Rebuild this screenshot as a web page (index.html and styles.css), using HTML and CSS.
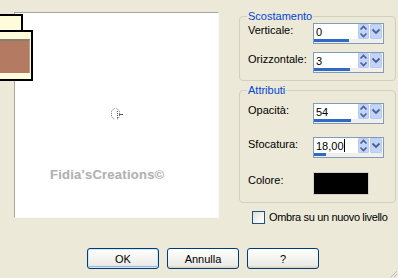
FILE: index.html
```html
<!DOCTYPE html>
<html lang="it">
<head>
<meta charset="utf-8">
<title>Ombra</title>
<link rel="stylesheet" href="styles.css">
</head>
<body>
<div class="dialog">
  <div class="main">
    <div class="preview">
      <div class="thumb thumb1"><div class="swatch"></div></div>
      <div class="thumb thumb2"><div class="swatch"></div></div>
      <svg class="cursor" width="14" height="14" viewBox="0 0 14 14">
        <path d="M4.5 1.5 L3 2.5 L1.5 4.5 L1.5 9.5 L3 11.5 L4.5 12.5" fill="none" stroke="#6f6f6f" stroke-width="1" stroke-dasharray="1 1"/>
        <path d="M6.5 1.5 L8 2.5 L9.5 4.5 L9.5 9.5 L8 11.5 L6.5 12.5" fill="none" stroke="#6f6f6f" stroke-width="1" stroke-dasharray="1 1"/>
        <line x1="7.5" y1="4" x2="7.5" y2="11" stroke="#555" stroke-width="1" stroke-dasharray="1 1"/>
        <line x1="9" y1="7.5" x2="13" y2="7.5" stroke="#555" stroke-width="1"/>
      </svg>
      <div class="watermark">Fidia'sCreations©</div>
    </div>
    <div class="side">
      <fieldset class="group group-offset">
        <legend>Scostamento</legend>
        <div class="row">
          <label class="lbl">Verticale:</label>
          <div class="spin">
            <div class="spin-top">
              <span class="val">0</span>
              <span class="btn-ud"><svg width="11" height="15" viewBox="0 0 11 15"><polyline points="2.5,5.5 5.5,2.5 8.5,5.5" fill="none" stroke="#4d6185" stroke-width="1.6"/><polyline points="2.5,9.5 5.5,12.5 8.5,9.5" fill="none" stroke="#4d6185" stroke-width="1.6"/></svg></span>
              <span class="btn-dd"><svg width="12" height="15" viewBox="0 0 12 15"><polyline points="2.5,5.5 6,9 9.5,5.5" fill="none" stroke="#4d6185" stroke-width="1.8"/></svg></span>
            </div>
            <div class="track"><div class="fill" style="width:35px"></div></div>
          </div>
        </div>
        <div class="row row-gap1">
          <label class="lbl">Orizzontale:</label>
          <div class="spin">
            <div class="spin-top">
              <span class="val">3</span>
              <span class="btn-ud"><svg width="11" height="15" viewBox="0 0 11 15"><polyline points="2.5,5.5 5.5,2.5 8.5,5.5" fill="none" stroke="#4d6185" stroke-width="1.6"/><polyline points="2.5,9.5 5.5,12.5 8.5,9.5" fill="none" stroke="#4d6185" stroke-width="1.6"/></svg></span>
              <span class="btn-dd"><svg width="12" height="15" viewBox="0 0 12 15"><polyline points="2.5,5.5 6,9 9.5,5.5" fill="none" stroke="#4d6185" stroke-width="1.8"/></svg></span>
            </div>
            <div class="track"><div class="fill" style="width:36px"></div></div>
          </div>
        </div>
      </fieldset>
      <fieldset class="group group-attr">
        <legend>Attributi</legend>
        <div class="row row-first2">
          <label class="lbl">Opacità:</label>
          <div class="spin">
            <div class="spin-top">
              <span class="val">54</span>
              <span class="btn-ud"><svg width="11" height="15" viewBox="0 0 11 15"><polyline points="2.5,5.5 5.5,2.5 8.5,5.5" fill="none" stroke="#4d6185" stroke-width="1.6"/><polyline points="2.5,9.5 5.5,12.5 8.5,9.5" fill="none" stroke="#4d6185" stroke-width="1.6"/></svg></span>
              <span class="btn-dd"><svg width="12" height="15" viewBox="0 0 12 15"><polyline points="2.5,5.5 6,9 9.5,5.5" fill="none" stroke="#4d6185" stroke-width="1.8"/></svg></span>
            </div>
            <div class="track"><div class="fill" style="width:37px"></div></div>
          </div>
        </div>
        <div class="row row-gap2">
          <label class="lbl">Sfocatura:</label>
          <div class="spin">
            <div class="spin-top">
              <span class="val">18,00<span class="caret"></span></span>
              <span class="btn-ud"><svg width="11" height="15" viewBox="0 0 11 15"><polyline points="2.5,5.5 5.5,2.5 8.5,5.5" fill="none" stroke="#4d6185" stroke-width="1.6"/><polyline points="2.5,9.5 5.5,12.5 8.5,9.5" fill="none" stroke="#4d6185" stroke-width="1.6"/></svg></span>
              <span class="btn-dd"><svg width="12" height="15" viewBox="0 0 12 15"><polyline points="2.5,5.5 6,9 9.5,5.5" fill="none" stroke="#4d6185" stroke-width="1.8"/></svg></span>
            </div>
            <div class="track"><div class="fill" style="width:12px"></div></div>
          </div>
        </div>
        <div class="row row-gap3">
          <label class="lbl lbl-color">Colore:</label>
          <div class="color-box"></div>
        </div>
      </fieldset>
      <label class="check-row"><span class="checkbox"></span><span class="check-text">Ombra su un nuovo livello</span></label>
    </div>
  </div>
  <div class="buttons">
    <button class="btn btn-default">OK</button>
    <button class="btn">Annulla</button>
    <button class="btn">?</button>
  </div>
  <svg class="grip" width="10" height="10" viewBox="0 0 10 10">
    <line x1="9" y1="3" x2="3" y2="9" stroke="#c4c1b0" stroke-width="1"/>
    <line x1="9" y1="6" x2="6" y2="9" stroke="#c4c1b0" stroke-width="1"/>
  </svg>
</div>
</body>
</html>
```

FILE: styles.css
```css
html, body {
  margin: 0;
  padding: 0;
}
body {
  background: #ece9d8;
  font-family: "Liberation Sans", Arial, sans-serif;
  font-size: 11px;
  color: #000;
  width: 398px;
  height: 278px;
  overflow: hidden;
}
.dialog {
  position: relative;
  width: 398px;
  height: 278px;
}
.main {
  display: flex;
  align-items: flex-start;
  height: 223px;
}
.preview {
  position: relative;
  margin: 12px 0 0 14px;
  width: 203px;
  height: 204px;
  background: #fff;
  border-top: 1px solid #aca899;
  border-left: 1px solid #aca899;
  border-right: 1px solid #fbfaf6;
  border-bottom: 1px solid #fbfaf6;
}
.thumb {
  position: absolute;
  background: #fffcdc;
  border: 2px solid #000;
  box-sizing: border-box;
}
.thumb1 {
  left: -35px;
  top: 1px;
  width: 43px;
  height: 30px;
}
.thumb1 .swatch {
  position: absolute;
  left: 0;
  top: 7px;
  width: 10px;
  height: 14px;
  background: #b47b62;
  border-top: 2px solid #838070;
}
.thumb2 {
  left: -35px;
  top: 17px;
  width: 53px;
  height: 51px;
}
.thumb2 .swatch {
  position: absolute;
  left: 0;
  top: 7px;
  width: 47px;
  height: 32px;
  background: #b47b62;
  border-top: 2px solid #838070;
  border-right: 1px solid #c89c88;
}
.cursor {
  position: absolute;
  left: 95px;
  top: 94px;
}
.watermark {
  position: absolute;
  left: 35px;
  top: 154px;
  font-family: "Liberation Sans", Arial, sans-serif;
  font-weight: bold;
  font-size: 13px;
  letter-spacing: 0.25px;
  color: #b2b2b2;
  text-shadow: 0 0 1px #e6e6e6;
  white-space: nowrap;
}
.side {
  margin-left: 20px;
  padding-top: 10px;
  width: 157px;
}
.group {
  margin: 0;
  padding: 0 11px 7px 8px;
  border: 1px solid #d0d0bf;
  border-radius: 4px;
  min-width: 0;
}
.group legend {
  padding: 0 1px;
  margin-left: -1px;
  color: #0046d5;
  line-height: 13px;
  font-size: 11px;
}
.group-attr {
  margin-top: 3px;
}
.row {
  display: flex;
  align-items: flex-start;
}
.row-gap1 { margin-top: 8px; }
.row-first2 { margin-top: 6px; }
.row-gap2 { margin-top: 13px; }
.row-gap3 { margin-top: 14px; }
.lbl {
  width: 65px;
  flex: none;
  line-height: 13px;
  padding-top: 1px;
  white-space: nowrap;
}
.lbl-color {
  padding-top: 2px;
}
.spin {
  width: 69px;
  height: 19px;
  border: 1px solid #7f9db9;
  background: #fff;
  display: flex;
  flex-direction: column;
}
.spin-top {
  display: flex;
  height: 15px;
}
.val {
  flex: 1;
  padding-left: 2px;
  line-height: 14px;
  padding-top: 1px;
  font-size: 11px;
  display: flex;
  align-items: flex-start;
}
.caret {
  display: inline-block;
  width: 1px;
  height: 13px;
  background: #000;
}
.btn-ud, .btn-dd {
  display: block;
  height: 15px;
  background: #c2d3fc;
  box-sizing: border-box;
  border: 1px solid #b9cbf3;
  border-radius: 1px;
}
.btn-ud {
  width: 11px;
}
.btn-dd {
  width: 12px;
  margin-left: 1px;
  margin-right: 1px;
}
.btn-ud svg, .btn-dd svg {
  display: block;
  margin: -1px;
}
.track {
  height: 4px;
  background: #f0efea;
}
.fill {
  height: 3px;
  background: #316ac5;
}
.color-box {
  width: 54px;
  height: 21px;
  background: #000;
  border: 1px solid #d4d0c8;
}
.check-row {
  display: flex;
  align-items: center;
  margin: 8px 0 0 13px;
  line-height: 13px;
  white-space: nowrap;
}
.check-text {
  letter-spacing: -0.35px;
}
.checkbox {
  width: 11px;
  height: 11px;
  border: 1px solid #1c5180;
  background: linear-gradient(135deg, #dcdcd7 0%, #f5f5f3 60%, #ffffff 100%);
  margin-right: 4px;
  flex: none;
}
.buttons {
  display: flex;
  gap: 8px;
  padding-left: 87px;
  margin-top: 25px;
}
.btn {
  width: 72px;
  height: 21px;
  padding: 0;
  font-family: "Liberation Sans", Arial, sans-serif;
  font-size: 11px;
  color: #000;
  border: 1px solid #003c74;
  border-radius: 3px;
  background: linear-gradient(180deg, #ffffff 0%, #f3f3ef 50%, #ecebe6 85%, #d6d0c5 100%);
}
.btn-default {
  box-shadow: inset 0 0 0 1px #cee7ff, inset 0 -1px 0 1px #98b8ea;
}
.grip {
  position: absolute;
  right: 0;
  bottom: 0;
}
```
